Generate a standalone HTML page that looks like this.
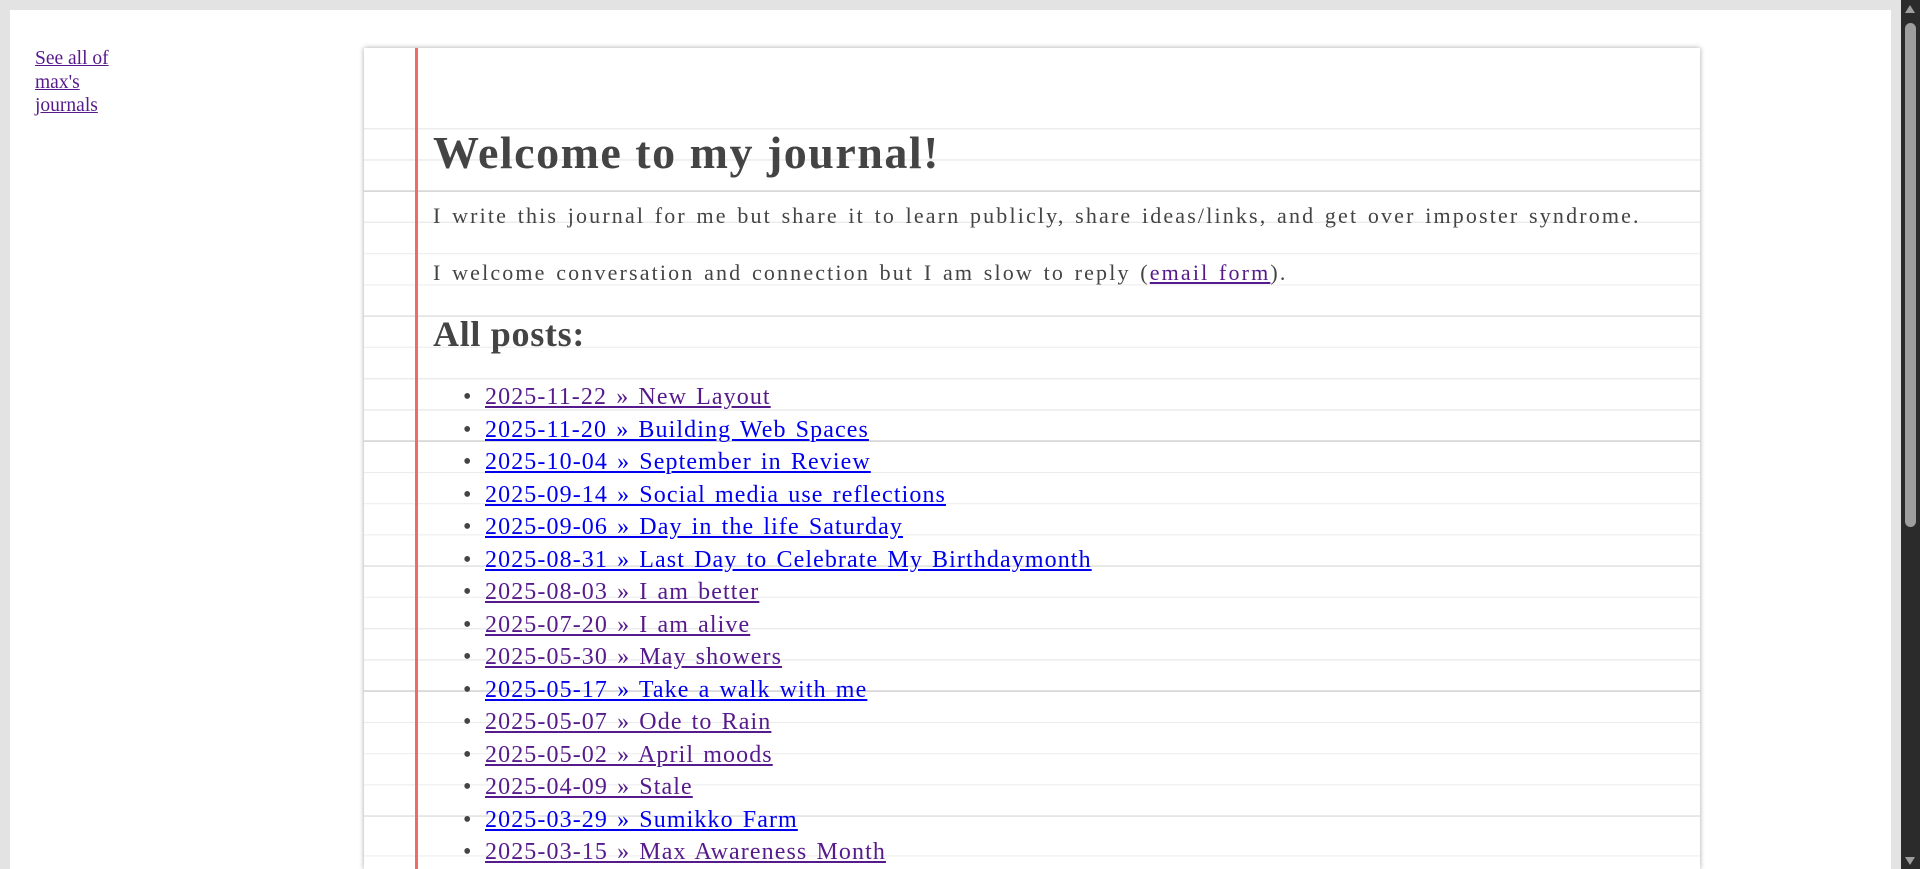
<!DOCTYPE html>
<html><head><style>
html,body{margin:0;padding:0;width:1920px;height:869px;overflow:hidden;background:#e3e3e3;font-family:"Liberation Serif",serif}
#page{position:absolute;left:10px;top:10px;width:1881px;height:859px;background:#fff}
#side{position:absolute;left:35px;top:47px;width:95px;font-size:19.5px;line-height:23.5px}
#side a{color:#551a8b}
#paper{position:absolute;left:364px;top:48px;width:1336px;height:821px;background:#fff;box-shadow:0 0 5px rgba(0,0,0,.35);
background-image:repeating-linear-gradient(to bottom,transparent 0,transparent 30px,#ececec 30px,#ececec 31.25px,transparent 31.25px,transparent 61.25px,#d2d2d2 61.25px,#d2d2d2 62.5px,transparent 62.5px,transparent 92.5px,#ececec 92.5px,#ececec 93.75px,transparent 93.75px,transparent 123.75px,#ececec 123.75px,#ececec 125px);
background-position:0 -43.75px;background-repeat:repeat-y}
#paper::before{content:"";position:absolute;left:0;right:0;top:0;height:79px;background:#fff}
#red{position:absolute;left:51px;top:0;width:3px;height:821px;background:#f06a6a}
.t{position:absolute;height:0;line-height:0;white-space:nowrap;color:#444}
a{text-decoration:underline}
.p{color:#551a8b}.b{color:#0000ee}
#sb{position:absolute;left:1901px;top:0;width:19px;height:869px;background:#2b2b2b}
#thumb{position:absolute;left:4px;top:23px;width:11px;height:504px;background:#9e9e9e;border-radius:6px}
.ar{position:absolute;left:4px;width:0;height:0;border-left:5.5px solid transparent;border-right:5.5px solid transparent}
.li{position:absolute;left:463px;height:0;line-height:0;white-space:nowrap;font-size:24px;color:#444}
.li i{font-style:normal;position:absolute;left:0;top:0}
.li span{position:absolute;left:22px;top:0;letter-spacing:1.1px;word-spacing:2px}
</style></head><body>
<div id="page"></div>
<div id="side"><a href="#">See all of max's journals</a></div>
<div id="paper"><div id="red"></div></div>

<div class="t" style="left:433px;top:153px;font-size:46px;font-weight:bold;letter-spacing:1.5px">Welcome to my journal!</div>
<div class="t" style="left:433px;top:216px;font-size:22px;letter-spacing:2.15px;word-spacing:2px">I write this journal for me but share it to learn publicly, share ideas/links, and get over imposter syndrome.</div>
<div class="t" style="left:433px;top:273px;font-size:22px;letter-spacing:2.15px;word-spacing:2px">I welcome conversation and connection but I am slow to reply (<a href="#" class="p">email form</a>).</div>
<div class="t" style="left:433px;top:334px;font-size:36px;font-weight:bold;letter-spacing:0.7px">All posts:</div>

<div class="li" style="top:397px"><i>•</i><span><a class="p" href="#">2025-11-22 » New Layout</a></span></div>
<div class="li" style="top:429.5px"><i>•</i><span><a class="b" href="#">2025-11-20 » Building Web Spaces</a></span></div>
<div class="li" style="top:462px"><i>•</i><span><a class="b" href="#">2025-10-04 » September in Review</a></span></div>
<div class="li" style="top:494.5px"><i>•</i><span><a class="b" href="#">2025-09-14 » Social media use reflections</a></span></div>
<div class="li" style="top:527px"><i>•</i><span><a class="b" href="#">2025-09-06 » Day in the life Saturday</a></span></div>
<div class="li" style="top:559.5px"><i>•</i><span><a class="b" href="#">2025-08-31 » Last Day to Celebrate My Birthdaymonth</a></span></div>
<div class="li" style="top:592px"><i>•</i><span><a class="p" href="#">2025-08-03 » I am better</a></span></div>
<div class="li" style="top:624.5px"><i>•</i><span><a class="p" href="#">2025-07-20 » I am alive</a></span></div>
<div class="li" style="top:657px"><i>•</i><span><a class="p" href="#">2025-05-30 » May showers</a></span></div>
<div class="li" style="top:689.5px"><i>•</i><span><a class="b" href="#">2025-05-17 » Take a walk with me</a></span></div>
<div class="li" style="top:722px"><i>•</i><span><a class="p" href="#">2025-05-07 » Ode to Rain</a></span></div>
<div class="li" style="top:754.5px"><i>•</i><span><a class="p" href="#">2025-05-02 » April moods</a></span></div>
<div class="li" style="top:787px"><i>•</i><span><a class="p" href="#">2025-04-09 » Stale</a></span></div>
<div class="li" style="top:819.5px"><i>•</i><span><a class="b" href="#">2025-03-29 » Sumikko Farm</a></span></div>
<div class="li" style="top:852px"><i>•</i><span><a class="p" href="#">2025-03-15 » Max Awareness Month</a></span></div>

<div id="sb"><div class="ar" style="top:5px;border-bottom:8px solid #9e9e9e"></div><div id="thumb"></div><div class="ar" style="top:857px;border-top:8px solid #9e9e9e"></div></div>
</body></html>
